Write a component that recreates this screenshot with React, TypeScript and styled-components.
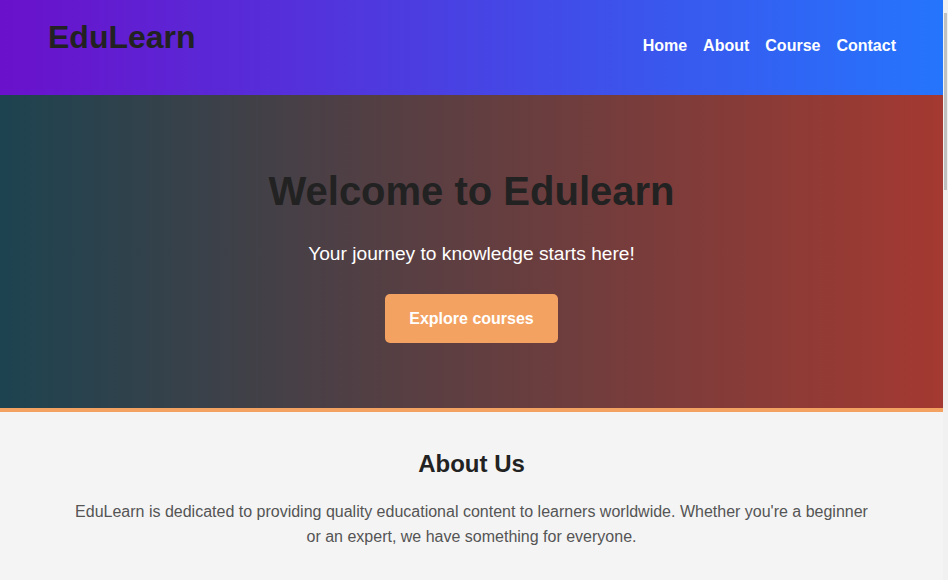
import React from "react";
import styled, { createGlobalStyle } from "styled-components";

const GlobalStyle = createGlobalStyle`
  html, body {
    margin: 0;
    padding: 0;
  }
  html::-webkit-scrollbar { display: none; }
  body {
    margin-right: 5px;
    font-family: "Liberation Sans", Arial, sans-serif;
    background: #f4f4f4;
    color: #222;
  }
  * { box-sizing: border-box; }
`;

const ScrollTrack = styled.div`
  position: fixed;
  top: 0;
  right: 0;
  width: 5px;
  height: 100vh;
  background: #f1f1f1;
  z-index: 10;
`;

const ScrollThumb = styled.div`
  position: absolute;
  top: 13px;
  left: 1px;
  width: 3px;
  height: 177px;
  background: #c1c1c1;
`;

const Header = styled.header`
  display: flex;
  justify-content: space-between;
  align-items: flex-start;
  height: 95px;
  padding: 0 47px 0 48px;
  background: linear-gradient(to right, #6a11cb, #2575fc);
`;

const Logo = styled.h1`
  margin: 19px 0 0;
  font-size: 32px;
  font-weight: 700;
  color: #222;
`;

const Nav = styled.nav`
  margin-top: 37px;
`;

const NavList = styled.ul`
  display: flex;
  gap: 16px;
  list-style: none;
  margin: 0;
  padding: 0;
`;

const NavLink = styled.a`
  color: #fff;
  font-size: 16px;
  font-weight: 700;
  text-decoration: none;
`;

const Hero = styled.section`
  display: flex;
  flex-direction: column;
  align-items: center;
  text-align: center;
  padding: 74px 20px 65px;
  background: linear-gradient(to right, #1d4350, #a43931);
  border-bottom: 4px solid #f4a261;
`;

const HeroTitle = styled.h2`
  margin: 0 0 29px;
  font-size: 40px;
  font-weight: 700;
  color: #222;
`;

const HeroText = styled.p`
  margin: 0 0 29px;
  font-size: 19.2px;
  color: #fff;
`;

const CtaButton = styled.button`
  font-family: inherit;
  font-size: 16px;
  font-weight: 700;
  color: #fff;
  background: #f4a261;
  border: none;
  border-radius: 5px;
  padding: 15.5px 24px;
  cursor: pointer;
`;

const Section = styled.section<{ $tall?: number }>`
  padding: 38px 20px 40px;
  text-align: center;
  background: #f4f4f4;
  min-height: ${(p) => (p.$tall ? `${p.$tall}px` : "auto")};
`;

const SectionTitle = styled.h2`
  margin: 0 0 21px;
  font-size: 24px;
  font-weight: 700;
  color: #222;
`;

const SectionText = styled.p`
  max-width: 800px;
  margin: 0 auto;
  font-size: 16px;
  line-height: 25px;
  color: #555;
`;

const CourseGrid = styled.div`
  display: grid;
  grid-template-columns: repeat(3, 1fr);
  gap: 24px;
  max-width: 840px;
  margin: 0 auto;
`;

const CourseCard = styled.div`
  background: #fff;
  border-radius: 8px;
  padding: 24px;
  box-shadow: 0 2px 6px rgba(0, 0, 0, 0.1);
  text-align: left;
`;

const CardTitle = styled.h3`
  margin: 0 0 10px;
  font-size: 18px;
  color: #222;
`;

const Footer = styled.footer`
  padding: 24px;
  text-align: center;
  background: #222;
  color: #fff;
  font-size: 14px;
`;

const courses = [
  { title: "Web Development", text: "Learn HTML, CSS and JavaScript from scratch." },
  { title: "Data Science", text: "Explore data analysis, statistics and machine learning." },
  { title: "Design", text: "Master the fundamentals of visual and UI design." },
];

export default function App() {
  return (
    <>
      <GlobalStyle />
      <ScrollTrack>
        <ScrollThumb />
      </ScrollTrack>
      <Header>
        <Logo>EduLearn</Logo>
        <Nav>
          <NavList>
            <li><NavLink href="#home">Home</NavLink></li>
            <li><NavLink href="#about">About</NavLink></li>
            <li><NavLink href="#courses">Course</NavLink></li>
            <li><NavLink href="#contact">Contact</NavLink></li>
          </NavList>
        </Nav>
      </Header>
      <Hero id="home">
        <HeroTitle>Welcome to Edulearn</HeroTitle>
        <HeroText>Your journey to knowledge starts here!</HeroText>
        <CtaButton>Explore courses</CtaButton>
      </Hero>
      <Section id="about">
        <SectionTitle>About Us</SectionTitle>
        <SectionText>
          EduLearn is dedicated to providing quality educational content to learners worldwide. Whether you're a beginner or an expert, we have something for everyone.
        </SectionText>
      </Section>
      <Section id="courses" $tall={500}>
        <SectionTitle>Our Courses</SectionTitle>
        <CourseGrid>
          {courses.map((c) => (
            <CourseCard key={c.title}>
              <CardTitle>{c.title}</CardTitle>
              <SectionText>{c.text}</SectionText>
            </CourseCard>
          ))}
        </CourseGrid>
      </Section>
      <Section id="contact" $tall={500}>
        <SectionTitle>Contact Us</SectionTitle>
        <SectionText>Email: info@edulearn.com</SectionText>
      </Section>
      <Footer>© 2024 EduLearn. All rights reserved.</Footer>
    </>
  );
}
